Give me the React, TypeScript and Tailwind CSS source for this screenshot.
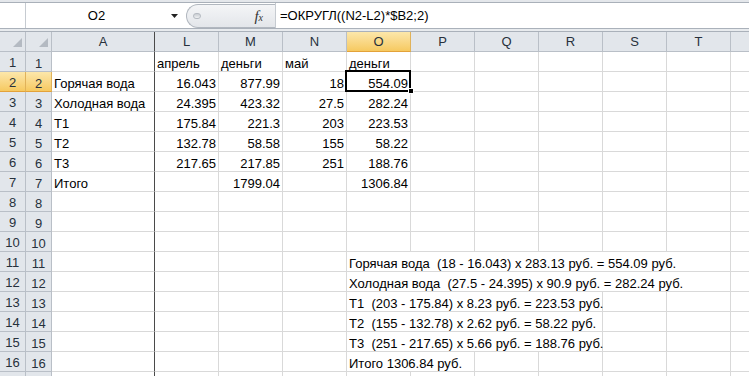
import type { ReactNode } from "react";

type Cell = { text?: string; right?: boolean; span?: number };
type Row = { a?: string; cells: Cell[] };

const COL_LETTERS = ["L", "M", "N", "O", "P", "Q", "R", "S", "T", "U"];

const rows: Row[] = [
  { cells: [{ text: "апрель" }, { text: "деньги" }, { text: "май" }, { text: "деньги" }] },
  { a: "Горячая вода", cells: [{ text: "16.043", right: true }, { text: "877.99", right: true }, { text: "18", right: true }, { text: "554.09", right: true }] },
  { a: "Холодная вода", cells: [{ text: "24.395", right: true }, { text: "423.32", right: true }, { text: "27.5", right: true }, { text: "282.24", right: true }] },
  { a: "Т1", cells: [{ text: "175.84", right: true }, { text: "221.3", right: true }, { text: "203", right: true }, { text: "223.53", right: true }] },
  { a: "Т2", cells: [{ text: "132.78", right: true }, { text: "58.58", right: true }, { text: "155", right: true }, { text: "58.22", right: true }] },
  { a: "Т3", cells: [{ text: "217.65", right: true }, { text: "217.85", right: true }, { text: "251", right: true }, { text: "188.76", right: true }] },
  { a: "Итого", cells: [{}, { text: "1799.04", right: true }, {}, { text: "1306.84", right: true }] },
  { cells: [] },
  { cells: [] },
  { cells: [] },
  { cells: [{}, {}, {}, { text: "Горячая вода  (18 - 16.043) x 283.13 руб. = 554.09 руб.", span: 6 }] },
  { cells: [{}, {}, {}, { text: "Холодная вода  (27.5 - 24.395) x 90.9 руб. = 282.24 руб.", span: 6 }] },
  { cells: [{}, {}, {}, { text: "Т1  (203 - 175.84) x 8.23 руб. = 223.53 руб.", span: 4 }] },
  { cells: [{}, {}, {}, { text: "Т2  (155 - 132.78) x 2.62 руб. = 58.22 руб.", span: 4 }] },
  { cells: [{}, {}, {}, { text: "Т3  (251 - 217.65) x 5.66 руб. = 188.76 руб.", span: 4 }] },
  { cells: [{}, {}, {}, { text: "Итого 1306.84 руб.", span: 2 }] },
  { cells: [] },
];

const spanClass: Record<number, string> = {
  1: "col-span-1",
  2: "col-span-2",
  4: "col-span-4",
  6: "col-span-6",
};

const hdrCell =
  "flex items-center justify-center pt-px border-r border-b border-[#b9bfc7] bg-[#e2e6eb] text-[#27313c]";
const rowHdr =
  "flex items-end justify-center leading-[15px] border-r border-b border-[#b9bfc7] bg-[#e2e6eb] text-[#27313c]";
const selHdr =
  "bg-gradient-to-b from-[#fce7aa] to-[#f6c95f] border-b-[#e3a23a] border-r-[#e0b25a]";
const gridCell = "flex items-end leading-[15px] px-[2px] border-r border-b border-[#d9d9d9] whitespace-pre text-black";

function Corner() {
  return (
    <div className="relative border-r border-b border-[#b9bfc7] bg-[#e2e6eb]">
      <svg className="absolute right-[3px] bottom-[4px]" width="9" height="9" viewBox="0 0 9 9">
        <polygon points="9,0 9,9 0,9" fill="#b4bac2" />
      </svg>
    </div>
  );
}

function renderRow(row: Row, idx: number): ReactNode[] {
  const n = idx + 1;
  const sel = n === 2;
  // last row is only a sliver at the bottom edge, its number isn't visible
  const label = n < rows.length ? n : "";
  const out: ReactNode[] = [];
  out.push(
    <div key={`h1-${n}`} className={`${rowHdr} pb-px ${sel ? selHdr : ""}`}>
      {label}
    </div>
  );
  out.push(
    <div key={`h2-${n}`} className={`${rowHdr} ${sel ? selHdr : ""}`}>
      {label}
    </div>
  );
  out.push(
    <div key={`a-${n}`} className={`${gridCell} border-r-[#4a4a4a]`}>
      {row.a}
    </div>
  );
  let col = 0;
  while (col < COL_LETTERS.length) {
    const c = row.cells[col] ?? {};
    const span = c.span ?? 1;
    const isSel = n === 2 && col === 3;
    out.push(
      <div
        key={`c-${n}-${col}`}
        className={`${gridCell} ${spanClass[span]} ${c.right ? "justify-end" : ""} ${isSel ? "relative z-10" : ""}`}
      >
        {c.text}
        {isSel && (
          <>
            <div className="absolute -left-[2px] -top-[2px] w-[66px] h-[22px] border-2 border-black" />
            <div className="absolute left-[61px] top-[16px] w-[6px] h-[6px] bg-black border border-white" />
          </>
        )}
      </div>
    );
    col += span;
  }
  return out;
}

export default function App() {
  return (
    <div className="w-[749px] h-[376px] overflow-hidden bg-white font-['Liberation_Sans',Arial,sans-serif] text-[13px]">
      {/* ribbon edge */}
      <div className="h-[3px] bg-[#e4e7eb] border-b border-[#a9b0b9]" />

      {/* formula bar */}
      <div className="h-[25px] flex bg-white">
        <div className="w-[26px] border-r border-[#c6cbd1]" />
        <div className="w-[160px] flex items-center">
          <div className="flex-1 text-center pr-[4px] text-black">O2</div>
          <svg className="mr-[8px]" width="7" height="4" viewBox="0 0 7 4">
            <polygon points="0,0 7,0 3.5,4" fill="#222" />
          </svg>
        </div>
        <div className="relative w-[89px] mt-[1px] flex items-center justify-end bg-gradient-to-b from-[#f4f5f7] to-[#e3e6ea] rounded-l-[12px] border border-r-0 border-[#b1b7bf]">
          <div className="absolute left-[6px] top-[8px] w-[8px] h-[6px] rounded-full bg-gradient-to-b from-[#c9cdd2] to-[#eef0f2] border border-[#b5bac1]" />
          <span className="mr-[12px] italic font-['Liberation_Serif',serif] text-[15px] text-[#333] leading-none">
            f<span className="text-[10px]">x</span>
          </span>
        </div>
        <div className="flex-1 flex items-center pl-[4px] border-l border-[#c6cbd1] text-black whitespace-pre">
          =ОКРУГЛ((N2-L2)*$B2;2)
        </div>
      </div>
      <div className="h-[4px] bg-[#e8ebee] border-y border-[#aab1ba]" />

      {/* sheet */}
      <div className="grid grid-cols-[26px_26px_103px_repeat(10,64px)] auto-rows-[20px]">
        <Corner />
        <Corner />
        <div className={`${hdrCell} border-r-[#4a4a4a]`}>A</div>
        {COL_LETTERS.map((l) => (
          <div key={l} className={`${hdrCell} ${l === "O" ? selHdr : ""}`}>
            {l === "U" ? "" : l}
          </div>
        ))}
        {rows.flatMap((r, i) => renderRow(r, i))}
      </div>
    </div>
  );
}
